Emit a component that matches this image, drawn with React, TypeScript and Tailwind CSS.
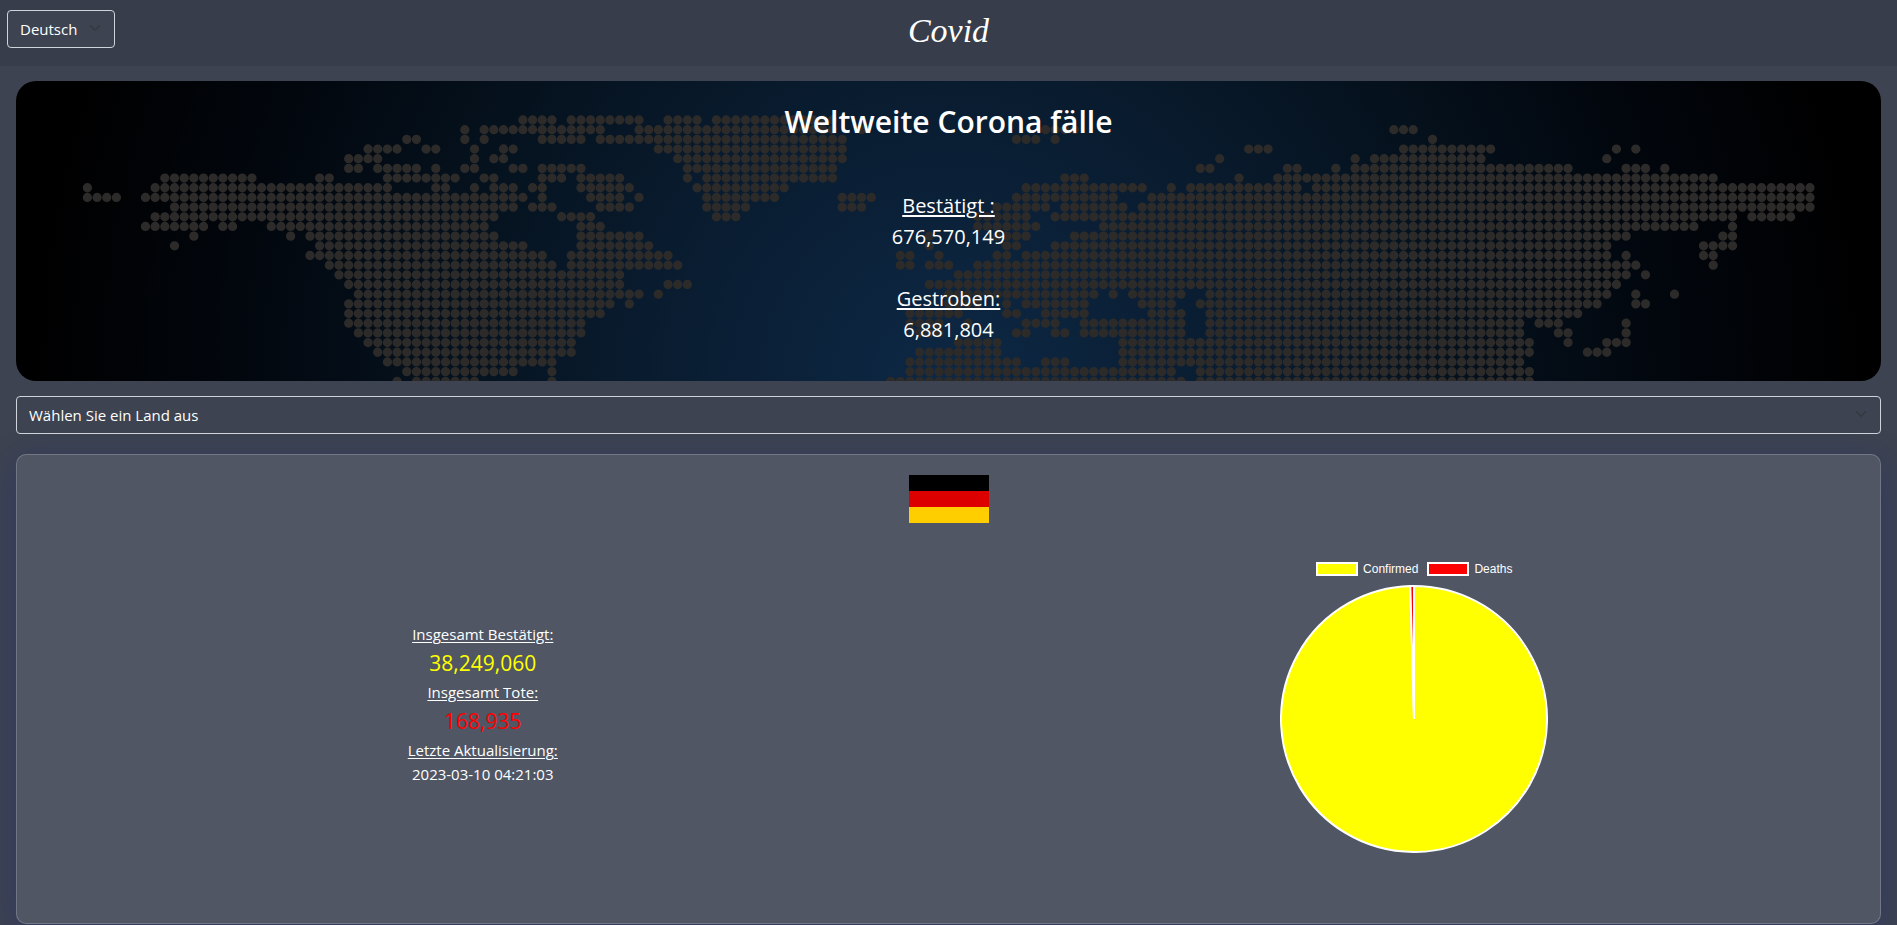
import { useState } from "react";
import type { ReactNode } from "react";

type Run = [number, number];

// Land cells of the dotted world map, row by row, as [first, last] columns.
const LAND: Run[][] = [
  [[45, 48], [50, 57], [60, 63], [65, 77]],
  [[39, 39], [41, 53], [57, 77], [80, 80], [99, 102], [135, 137]],
  [[33, 34], [39, 39], [41, 41], [47, 51], [53, 78], [96, 98], [100, 100], [139, 139]],
  [[29, 32], [35, 36], [40, 40], [43, 44], [59, 78], [120, 122], [136, 145], [158, 158], [160, 160]],
  [[27, 30], [40, 40], [42, 43], [61, 78], [117, 117], [131, 131], [133, 144], [157, 157]],
  [[27, 28], [30, 34], [36, 36], [39, 40], [44, 45], [47, 51], [62, 77], [115, 116], [124, 125], [129, 129], [131, 153], [159, 161], [163, 163]],
  [[8, 17], [24, 25], [31, 38], [41, 42], [47, 49], [51, 55], [62, 62], [64, 77], [101, 103], [119, 119], [123, 168]],
  [[0, 0], [7, 31], [36, 37], [40, 40], [42, 44], [46, 47], [51, 56], [63, 72], [97, 109], [112, 112], [114, 125], [127, 178]],
  [[0, 3], [6, 45], [47, 47], [52, 55], [57, 57], [64, 71], [78, 81], [96, 106], [110, 178]],
  [[9, 44], [46, 48], [53, 56], [64, 68], [78, 80], [94, 99], [101, 107], [109, 178]],
  [[7, 42], [49, 52], [65, 67], [92, 97], [100, 170], [172, 176]],
  [[6, 12], [14, 15], [19, 41], [51, 53], [92, 98], [105, 166], [170, 170]],
  [[11, 11], [21, 21], [23, 42], [51, 57], [87, 87], [94, 97], [102, 159], [169, 170]],
  [[9, 9], [24, 45], [51, 58], [87, 87], [95, 96], [100, 157], [167, 170]],
  [[23, 47], [50, 60], [84, 85], [88, 88], [94, 95], [97, 157], [159, 159], [167, 168]],
  [[25, 48], [50, 61], [84, 85], [87, 89], [92, 160], [168, 168]],
  [[26, 55], [90, 159], [161, 161]],
  [[27, 55], [60, 62], [87, 158]],
  [[28, 57], [59, 59], [89, 104], [106, 106], [108, 113], [116, 157], [160, 160], [164, 164]],
  [[27, 54], [56, 56], [89, 92], [95, 95], [97, 103], [109, 112], [115, 156], [160, 161]],
  [[27, 53], [85, 90], [95, 96], [99, 103], [110, 113], [116, 154]],
  [[27, 51], [85, 88], [91, 91], [97, 100], [103, 113], [116, 148], [150, 152], [159, 159]],
  [[28, 51], [86, 88], [96, 97], [100, 101], [103, 113], [116, 148], [152, 153], [159, 159]],
  [[29, 50], [90, 94], [107, 149], [153, 153], [157, 159]],
  [[30, 50], [86, 94], [107, 149], [155, 157]],
  [[31, 48], [85, 96], [99, 101], [107, 148]],
  [[33, 44], [48, 48], [85, 112], [115, 149]],
  [[32, 32], [34, 40], [48, 48], [83, 113], [115, 149]],
];

const DOTS = LAND.map((runs, row) =>
  runs
    .map(([first, last]) => {
      let d = "";
      for (let col = first; col <= last; col++) {
        d += `M${col + 7}.04 ${row + 4}.03a.48 .48 0 1 0 .96 0a.48 .48 0 1 0-.96 0`;
      }
      return d;
    })
    .join(""),
).join("");

function WorldMap() {
  return (
    <svg
      className="absolute inset-0 size-full"
      viewBox="0 0 193 31"
      preserveAspectRatio="xMidYMin slice"
      aria-hidden="true"
    >
      <path d={DOTS} fill="#2d2b29" />
    </svg>
  );
}

function Dropdown({ label, children }: { label: string; children: ReactNode }) {
  return (
    <div className="relative">
      <select
        aria-label={label}
        className="block h-[38px] w-full appearance-none rounded border border-[#ced4da] bg-[#3d4350] pr-8 pl-3 text-[15px] text-white"
      >
        {children}
      </select>
      <svg
        className="pointer-events-none absolute top-3 right-3 h-3 w-4"
        viewBox="0 0 16 16"
        fill="none"
        stroke="#343a40"
        strokeWidth="2"
        strokeLinecap="round"
        strokeLinejoin="round"
        aria-hidden="true"
      >
        <path d="m2 5 6 6 6-6" />
      </svg>
    </div>
  );
}

function Flag() {
  return (
    <svg className="mx-auto h-12 w-20" viewBox="0 0 5 3" role="img" aria-label="Deutschland" shapeRendering="crispEdges">
      <path fill="#000" d="M0 0h5v3H0z" />
      <path fill="#d00" d="M0 1h5v2H0z" />
      <path fill="#ffce00" d="M0 2h5v1H0z" />
    </svg>
  );
}

const confirmed = 38249060;
const deaths = 168935;

function Pie() {
  const angle = (2 * Math.PI * deaths) / (confirmed + deaths);
  const x = 134 - 133 * Math.sin(angle);
  const y = 134 - 133 * Math.cos(angle);
  return (
    <svg className="size-[268px]" viewBox="0 0 268 268" stroke="#fff" strokeWidth="2" strokeLinejoin="bevel" aria-hidden="true">
      <path fill="#ff0" d={`M134 134V1A133 133 0 1 1 ${x} ${y}Z`} />
      <path fill="red" d={`M134 134L${x} ${y}A133 133 0 0 1 134 1Z`} />
    </svg>
  );
}

function Legend() {
  return (
    <ul className="flex gap-[9px] font-['Liberation_Sans',Arial,sans-serif] text-xs leading-[14px] text-white">
      <li className="flex gap-[5px]">
        <span className="h-3.5 w-[42px] border-2 border-white bg-[#ff0]" />
        Confirmed
      </li>
      <li className="flex gap-[5px]">
        <span className="h-3.5 w-[42px] border-2 border-white bg-[#f00]" />
        Deaths
      </li>
    </ul>
  );
}

export default function App() {
  const [countries] = useState(["Deutschland", "Frankreich", "Italien", "Spanien"]);
  return (
    <div className="min-h-screen bg-[#3d4350] font-['Open_Sans','Noto_Sans',sans-serif] text-white">
      <header className="grid h-[66px] grid-cols-[1fr_auto_1fr] items-start bg-[#373d4a] px-[7px] pt-2.5">
        <div className="w-[108px]">
          <Dropdown label="Sprache">
            <option>Deutsch</option>
            <option>English</option>
          </Dropdown>
        </div>
        <a href="#" className="font-['Liberation_Serif',serif] text-[34px] leading-[42px] italic">
          Covid
        </a>
      </header>

      <main className="px-4 pt-[15px]">
        <section className="relative overflow-hidden rounded-[20px] bg-[radial-gradient(circle_farthest-side_at_50%_100%,#0d2845_0%,#091b2e_34%,#05121e_54%,#02070e_76%,#000_98%)] pt-[22px] pb-9 text-center">
          <WorldMap />
          <div className="relative">
            <h1 className="text-[30px] leading-[38px] font-semibold">Weltweite Corona fälle</h1>
            <dl className="mt-[49px] text-xl leading-[31px]">
              <dt className="underline underline-offset-2">Bestätigt :</dt>
              <dd className="mb-[31px]">676,570,149</dd>
              <dt className="underline underline-offset-2">Gestroben:</dt>
              <dd>6,881,804</dd>
            </dl>
          </div>
        </section>

        <div className="mt-[15px]">
          <Dropdown label="Land">
            <option>Wählen Sie ein Land aus</option>
            {countries.map((country) => (
              <option key={country}>{country}</option>
            ))}
          </Dropdown>
        </div>

        <section className="mt-5 rounded-[10px] border border-white/20 bg-[#505664] pt-5 pb-[69px] shadow-[0_8px_32px_0_rgba(31,38,135,0.37)]">
          <Flag />
          <div className="mt-[31px] grid grid-cols-2 items-center">
            <dl className="text-center text-[15px] leading-6">
              <dt className="underline underline-offset-2">Insgesamt Bestätigt:</dt>
              <dd className="text-[21px] leading-[34px] text-[#ff0]">38,249,060</dd>
              <dt className="underline underline-offset-2">Insgesamt Tote:</dt>
              <dd className="text-[21px] leading-[34px] text-[#f00]">168,935</dd>
              <dt className="underline underline-offset-2">Letzte Aktualisierung:</dt>
              <dd>2023-03-10 04:21:03</dd>
            </dl>
            <div className="flex flex-col items-center gap-[9px] pt-2 pb-px">
              <Legend />
              <Pie />
            </div>
          </div>
        </section>
      </main>
    </div>
  );
}
